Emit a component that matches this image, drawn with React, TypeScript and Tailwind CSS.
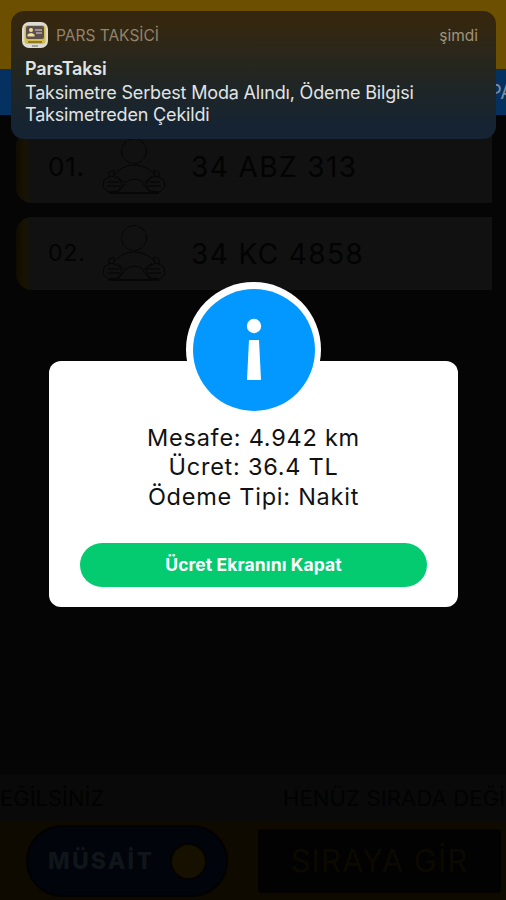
import * as React from 'react'

const drivers = [
  { order: '01.', plate: '34 ABZ 313', orderClass: 'text-[26px] tracking-[0.8px]' },
  { order: '02.', plate: '34 KC 4858', orderClass: 'text-[23px] tracking-[0.8px]' }
]

function DriverIcon() {
  return (
    <svg viewBox="0 0 66 60" className="h-15 w-[66px] shrink-0" fill="none" stroke="#050505" strokeWidth="1">
      <circle cx="32" cy="14" r="12.5" strokeDasharray="9 1.5" />
      <path d="M12 38C18 31 25 28 32 28s15 3 22 10" />
      <path d="M15 39l8 7c5-5 14-5 19 0l8-7" />
      <path d="M7 40v-5l5-2v6M57 40v-5l-5-2v6" />
      <path d="M15 41l-6-2-7 4-1 7 5 5 10-1 4-6-2-5zM6 45h11M5 49h13" />
      <path d="M49 41l6-2 7 4 1 7-5 5-10-1-4-6 2-5zM58 45H47M59 49H46" />
      <path d="M16 55l7-8M48 55l-7-8" />
      <path d="M7 56h50" strokeWidth="1.6" />
    </svg>
  )
}

function AppIcon() {
  return (
    <svg viewBox="0 0 28 28" className="h-7 w-7">
      <rect x="1" y="1" width="26" height="26" rx="7" fill="#dedbd2" />
      <rect x="3.5" y="4" width="21" height="19" rx="3" fill="#d2bd4a" />
      <rect x="5" y="5" width="18" height="13" rx="2" fill="#5c4f50" />
      <circle cx="10" cy="9" r="2" fill="#f0df91" />
      <path d="M6.5 15.5v-2q3.5-3 7 0v2z" fill="#f0df91" />
      <path d="M14 9h7M15 12h6" stroke="#b9a9a2" strokeWidth="1.4" />
      <path d="M7 21h14" stroke="#6f5e1c" strokeWidth="1.4" />
      <path d="M11 25h6" stroke="#8f8c86" strokeWidth="1.5" />
    </svg>
  )
}

function Notification() {
  return (
    <div className="absolute left-[11px] top-[11px] z-20 h-[128px] w-[485px] rounded-[13px] bg-linear-to-b from-[#35270f] from-10% via-[#222621] via-50% to-[#152332] to-90% px-[14px] pt-[10px] text-[#e0e3e5]">
      <div className="flex h-7 items-center">
        <div className="-ml-1 mr-[7px]">
          <AppIcon />
        </div>
        <div className="pt-px text-[15.5px] text-[#94836a]">PARS TAKSİCİ</div>
        <div className="ml-auto mr-1 pt-px text-[15.5px] text-[#a0937d]">şimdi</div>
      </div>
      <div className="mt-[9px] text-[18px] font-semibold leading-[22px] tracking-[-0.2px]">ParsTaksi</div>
      <div className="mt-[2px] whitespace-nowrap text-[18px] leading-[22px] tracking-[-0.17px]">
        Taksimetre Serbest Moda Alındı, Ödeme Bilgisi
        <br />
        Taksimetreden Çekildi
      </div>
    </div>
  )
}

function InfoDialog() {
  return (
    <div className="absolute left-[49px] top-[361px] z-10 flex h-[246px] w-[409px] flex-col items-center rounded-xl bg-white">
      <div className="-mt-[79px] flex h-[135px] w-[135px] shrink-0 items-center justify-center rounded-full bg-white">
        <svg viewBox="0 0 122 122" className="h-[122px] w-[122px]">
          <circle cx="61" cy="61" r="61" fill="#0398ff" />
          <circle cx="61" cy="37" r="7.2" fill="#fff" />
          <path d="M56 51h10l2 40H54z" fill="#fff" />
        </svg>
      </div>
      <div className="mt-[6px] text-center text-[23.5px] leading-[29.4px] tracking-[0.75px] text-[#111]">
        <div>Mesafe: 4.942 km</div>
        <div>Ücret: 36.4 TL</div>
        <div>Ödeme Tipi: Nakit</div>
      </div>
      <button className="mt-[32px] h-[44px] w-[347px] rounded-full bg-[#04cb70] text-[17.5px] font-bold tracking-[0.1px] text-white">
        Ücret Ekranını Kapat
      </button>
    </div>
  )
}

export default function App() {
  return (
    <div className="relative flex h-[900px] w-[506px] flex-col overflow-hidden bg-[#050505] font-['Inter','Liberation_Sans',sans-serif]">
      <div className="h-[69px] shrink-0 bg-[#6c5000]" />
      <div className="flex h-[46px] shrink-0 items-center bg-[#053160] pl-[489px] text-[20px] text-[#798ba0]">PA</div>

      <div className="flex flex-col gap-[14px] pl-4 pr-[14px] pt-[15px]">
        {drivers.map(driver => (
          <div
            key={driver.order}
            className="flex h-[73px] items-center overflow-hidden rounded-l-2xl bg-linear-to-r from-[#0f0c02] via-[#191300] via-[9px] to-[#111] to-[14px] pl-8 text-[#030303]"
          >
            <div className="w-[54px]">
              <span className={driver.orderClass}>{driver.order}</span>
            </div>
            <DriverIcon />
            <div className="ml-[23px] whitespace-nowrap text-[28px] tracking-[1.4px]">{driver.plate}</div>
          </div>
        ))}
      </div>

      <div className="mt-auto flex h-[48px] shrink-0 items-center justify-between overflow-hidden whitespace-nowrap bg-[#090909] text-[22px] text-[#020202]">
        <div>EĞİLSİNİZ</div>
        <div className="w-[223px] tracking-[0.15px]">HENÜZ SIRADA DEĞİ</div>
      </div>
      <div className="flex h-[78px] shrink-0 items-start bg-[#0e0a00] pl-[26px]">
        <div className="mt-[3px] flex h-[72px] w-[202px] items-center rounded-full border-2 border-[#020202] bg-[#01040b] pl-5">
          <div className="w-[122px] text-[23px] font-extrabold tracking-[2.2px] text-[#10151a]">MÜSAİT</div>
          <div className="h-[37px] w-[37px] rounded-full border-2 border-[#040300] bg-[#151000]" />
        </div>
        <div className="ml-[30px] mt-[7px] flex h-[64px] w-[243px] items-center justify-center rounded-sm bg-[#020202] text-[31px] tracking-[1px] text-[#0c0900]">
          SIRAYA GİR
        </div>
      </div>

      <InfoDialog />
      <Notification />
    </div>
  )
}
